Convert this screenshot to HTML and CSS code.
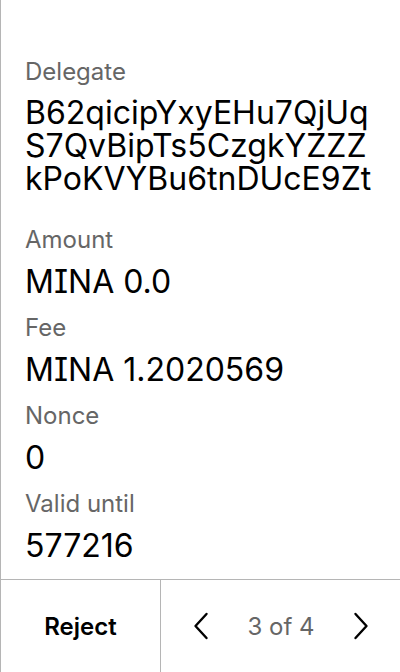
FILE: index.html
```html
<!DOCTYPE html>
<html>
<head>
<meta charset="utf-8">
<link rel="stylesheet" href="styles.css">
</head>
<body>
<div class="screen">
  <div class="details">
    <div class="field field-address">
      <div class="label">Delegate</div>
      <div class="value address">
        <span class="line">B62qicipYxyEHu7QjUq</span>
        <span class="line">S7QvBipTs5CzgkYZZZ</span>
        <span class="line">kPoKVYBu6tnDUcE9Zt</span>
      </div>
    </div>
    <div class="field">
      <div class="label">Amount</div>
      <div class="value">MINA 0.0</div>
    </div>
    <div class="field">
      <div class="label">Fee</div>
      <div class="value">MINA 1.2020569</div>
    </div>
    <div class="field">
      <div class="label">Nonce</div>
      <div class="value">0</div>
    </div>
    <div class="field">
      <div class="label">Valid until</div>
      <div class="value">577216</div>
    </div>
  </div>
  <div class="footer">
    <button class="reject">Reject</button>
    <div class="pager">
      <button class="nav" aria-label="Previous">
        <svg width="16" height="28" viewBox="0 0 16 28"><path d="M13.5 2 L2.5 14 L13.5 26" fill="none" stroke="#000" stroke-width="2.4" stroke-linecap="round" stroke-linejoin="round"/></svg>
      </button>
      <span class="count">3 of 4</span>
      <button class="nav" aria-label="Next">
        <svg width="16" height="28" viewBox="0 0 16 28"><path d="M2.5 2 L13.5 14 L2.5 26" fill="none" stroke="#000" stroke-width="2.4" stroke-linecap="round" stroke-linejoin="round"/></svg>
      </button>
    </div>
  </div>
</div>
</body>
</html>
```
FILE: styles.css
```css
html, body {
  margin: 0;
  padding: 0;
  background: #fff;
}
body {
  font-family: Inter, "Noto Sans", sans-serif;
  font-feature-settings: "cv08";
  color: #000;
}
.screen {
  width: 400px;
  height: 672px;
  box-sizing: border-box;
  border-left: 1px solid #b5b5b5;
  display: flex;
  flex-direction: column;
}
.details {
  flex: 1;
  padding: 58px 0 0 24px;
  display: flex;
  flex-direction: column;
}
.field {
  display: flex;
  flex-direction: column;
  gap: 10px;
  margin-bottom: 14px;
}
.field-address {
  margin-bottom: 31px;
}
.label {
  font-size: 24px;
  line-height: 28px;
  color: #666;
}
.value {
  font-size: 32px;
  line-height: 36px;
  color: #000;
  white-space: nowrap;
}
.address {
  display: flex;
  flex-direction: column;
  line-height: 33px;
}
.line {
  display: block;
}
.footer {
  height: 92px;
  border-top: 1px solid #b5b5b5;
  display: flex;
  flex-shrink: 0;
}
button {
  font-family: inherit;
  font-feature-settings: inherit;
  background: none;
  border: 0;
  padding: 0;
  cursor: pointer;
}
.reject {
  width: 160px;
  border-right: 1px solid #b5b5b5;
  font-size: 24px;
  font-weight: 600;
  color: #000;
}
.pager {
  flex: 1;
  display: flex;
  align-items: center;
  justify-content: space-between;
  padding: 0 27px 0 28px;
}
.nav {
  width: 24px;
  height: 40px;
  display: flex;
  align-items: center;
  justify-content: center;
}
.count {
  font-size: 24px;
  color: #666;
}
```
